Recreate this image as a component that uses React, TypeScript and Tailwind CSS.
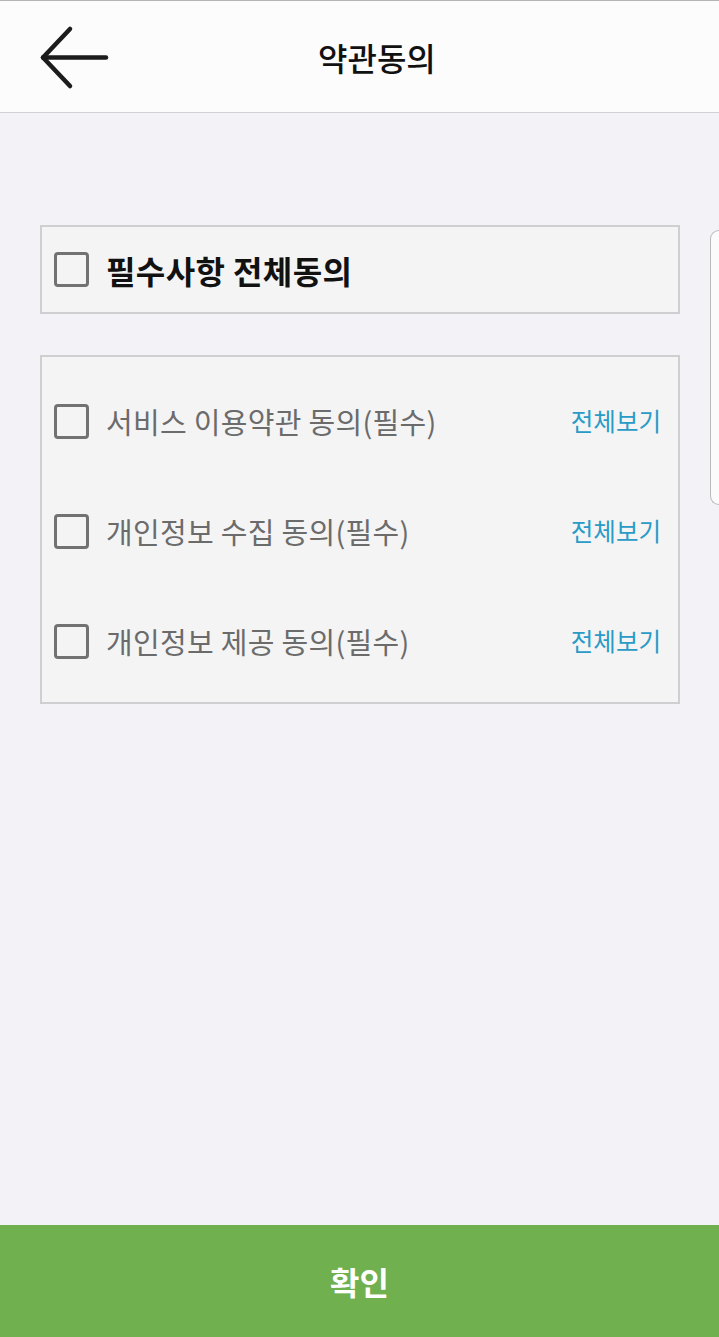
import React, { useState } from 'react';

const terms = [
  { id: 'service', label: '서비스 이용약관 동의(필수)' },
  { id: 'privacy', label: '개인정보 수집 동의(필수)' },
  { id: 'provide', label: '개인정보 제공 동의(필수)' },
];

const Box: React.FC<{ checked: boolean; onClick: () => void }> = ({ checked, onClick }) => (
  <button
    onClick={onClick}
    className="w-[35px] h-[35px] shrink-0 rounded-[4px] border-[3px] border-[#727272] flex items-center justify-center"
  >
    {checked && (
      <svg width="22" height="22" viewBox="0 0 24 24" fill="none" stroke="#727272" strokeWidth="3.5" strokeLinecap="round" strokeLinejoin="round">
        <path d="M4 12l5 5L20 6" />
      </svg>
    )}
  </button>
);

export default function App() {
  const [checked, setChecked] = useState<Record<string, boolean>>({});
  const allChecked = terms.every((t) => checked[t.id]);

  const toggleAll = () => {
    const next: Record<string, boolean> = {};
    terms.forEach((t) => (next[t.id] = !allChecked));
    setChecked(next);
  };

  return (
    <div
      className="relative h-screen w-full flex flex-col bg-[#f2f2f7] overflow-hidden"
      style={{ fontFamily: '"Noto Sans CJK KR", "Noto Sans", sans-serif' }}
    >
      {/* Header */}
      <header className="h-[113px] shrink-0 bg-[#fcfcfd] border-t border-t-[#b4b4b4] border-b border-b-[#d2d2d6] flex items-center">
        <button className="pl-[36px] pt-[2px]" aria-label="뒤로">
          <svg width="76" height="72" viewBox="0 0 76 72" fill="none" stroke="#1c1c1c" strokeWidth="4.5" strokeLinecap="round" strokeLinejoin="round">
            <path d="M34 7L7 35.5L34 64" />
            <path d="M7 35.5H70" />
          </svg>
        </button>
        <h1 className="ml-[206px] text-[32px] font-medium text-[#111] leading-none">약관동의</h1>
      </header>

      {/* Body */}
      <main className="flex-1 px-[40px] pt-[112px] pr-[39px]">
        <div className="h-[89px] border-2 border-[#cfcfd2] bg-[#f4f4f5] flex items-center pl-[12px] gap-[17px]">
          <Box checked={allChecked} onClick={toggleAll} />
          <span className="text-[32px] font-bold text-[#111] leading-none tracking-[0.4px]">필수사항 전체동의</span>
        </div>

        <div className="mt-[41px] border-2 border-[#cfcfd2] bg-[#f4f4f5] pt-[9px] pb-[6px] pl-[12px] pr-[17px]">
          {terms.map((t) => (
            <div key={t.id} className="h-[110px] flex items-center">
              <Box checked={!!checked[t.id]} onClick={() => setChecked({ ...checked, [t.id]: !checked[t.id] })} />
              <span className="ml-[17px] flex-1 text-[29px] text-[#6b6b6b] leading-none tracking-[0.3px]">{t.label}</span>
              <button className="text-[24.5px] text-[#2a9bc6] leading-none">전체보기</button>
            </div>
          ))}
        </div>
      </main>

      {/* Footer */}
      <button className="h-[112px] shrink-0 w-full bg-[#71b04e] text-white text-[32px] font-bold flex items-center justify-center">
        확인
      </button>

      {/* Edge panel handle */}
      <div className="absolute right-0 top-[230px] w-[9px] h-[275px] rounded-l-[10px] border border-r-0 border-[#b9b9bc] bg-[#fbfbfc]" />
    </div>
  );
}
